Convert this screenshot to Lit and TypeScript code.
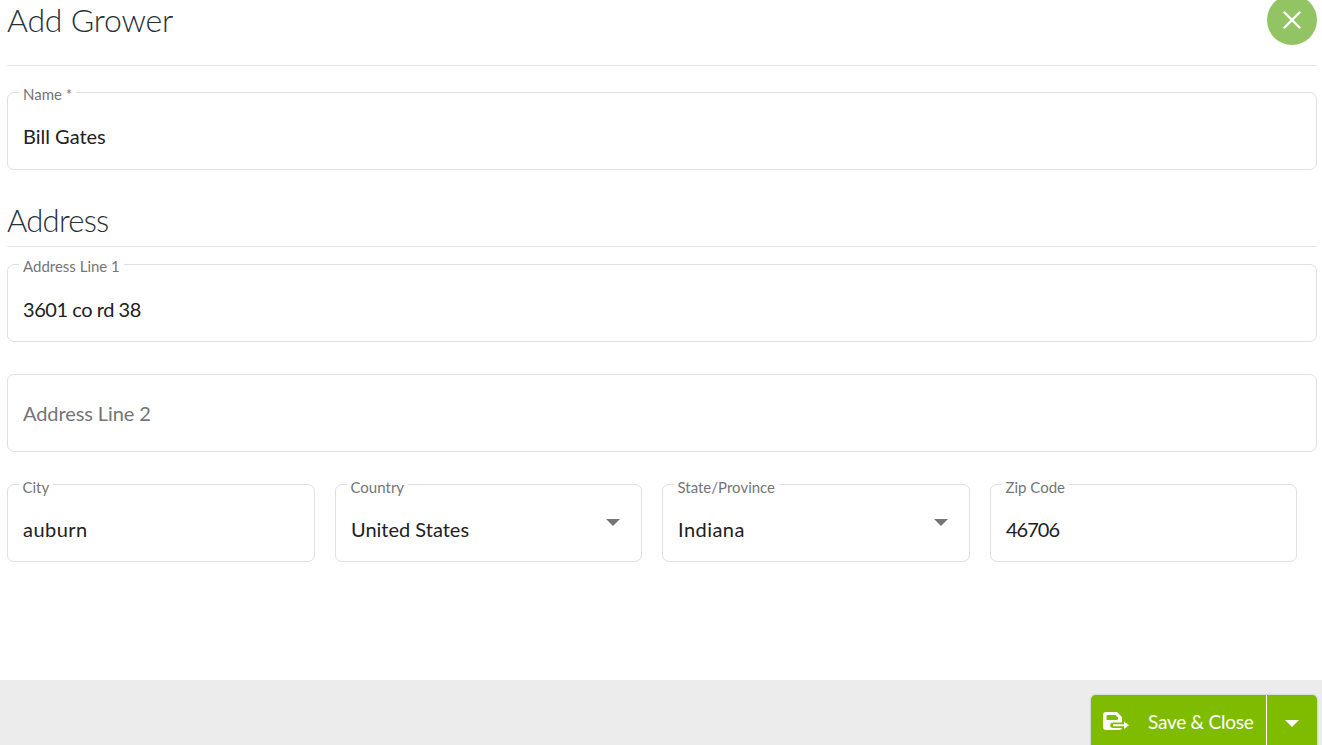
import { LitElement, html, css } from "lit";
import { customElement } from "lit/decorators.js";

@customElement("text-field")
class TextField extends LitElement {
  static properties = {
    label: {},
    value: {},
    select: { type: Boolean },
    tight: { type: Boolean },
    tighter: { type: Boolean },
    wide: { type: Boolean },
    low: { type: Boolean },
    lift: { type: Boolean },
  };
  label = "";
  value = "";
  select = false;
  tight = false;
  tighter = false;
  wide = false;
  low = false;
  lift = false;
  static styles = css`
    :host { display: block; }
    .box {
      position: relative;
      box-sizing: border-box;
      height: 78px;
      border: 1px solid #e0e0e0;
      border-radius: 7px;
      background: #fff;
      display: flex;
      align-items: center;
      padding: 12px 15px 0;
      font-size: 20px;
      color: #212121;
    }
    .box.lift { padding-top: 10px; }
    .val { flex: 1; white-space: nowrap; }
    .tight .val { letter-spacing: -0.45px; }
    .tighter .val { letter-spacing: -1px; }
    .wide .val { letter-spacing: 0.45px; }
    .label {
      position: absolute;
      left: 11px;
      top: -8px;
      padding: 0 4px;
      background: #fff;
      font-size: 15px;
      line-height: 18px;
      color: #757575;
      white-space: nowrap;
    }
    .low .label { top: -7px; left: 10.5px; }
    .placeholder { color: #757575; letter-spacing: -0.1px; }
    .box.empty { padding-top: 0; }
    .arrow {
      position: absolute;
      right: 21px;
      top: 34px;
      width: 0;
      height: 0;
      border-left: 7px solid transparent;
      border-right: 7px solid transparent;
      border-top: 7px solid #757575;
    }
  `;
  render() {
    if (!this.value) {
      return html`<div class="box empty"><span class="val placeholder">${this.label}</span></div>`;
    }
    const cls = ["box", this.tight && "tight", this.tighter && "tighter", this.wide && "wide", this.low && "low", this.lift && "lift"]
      .filter(Boolean)
      .join(" ");
    return html`<div class=${cls}>
      <span class="label">${this.label}</span>
      <span class="val">${this.value}</span>
      ${this.select ? html`<span class="arrow"></span>` : ""}
    </div>`;
  }
}

@customElement("app-root")
class AppRoot extends LitElement {
  static styles = css`
    :host {
      display: flex;
      flex-direction: column;
      height: 745px;
      overflow: hidden;
      background: #fff;
      font-family: "Lato", "Noto Sans", sans-serif;
      color: #212121;
    }
    .main { flex: 1; padding: 0 5px 0 7px; min-height: 0; }
    .head {
      display: flex;
      justify-content: space-between;
      height: 65px;
      border-bottom: 1px solid #e6e6e6;
    }
    h1, h2 { margin: 0; font-weight: 300; color: #263238; }
    h1 { font-size: 32px; line-height: 40px; letter-spacing: -0.2px; }
    .close {
      width: 50px;
      height: 50px;
      margin-top: -5px;
      border: 0;
      padding: 0;
      border-radius: 50%;
      background: #92c464;
      display: flex;
      align-items: center;
      justify-content: center;
    }
    .name { display: block; margin-top: 26px; }
    .sec {
      margin-top: 31px;
      height: 46px;
      border-bottom: 1px solid #e6e6e6;
      box-sizing: border-box;
    }
    h2 { font-size: 31px; line-height: 38px; letter-spacing: -0.75px; }
    .stack { margin-top: 17px; display: flex; flex-direction: column; gap: 32px; }
    .row {
      display: grid;
      grid-template-columns: 308px 307px 308px 307px;
      column-gap: 20px;
    }
    .foot {
      height: 65px;
      flex: none;
      background: #ececec;
      display: flex;
      justify-content: flex-end;
      padding: 15px 5px 0 0;
      box-sizing: border-box;
      overflow: hidden;
    }
    .btn {
      width: 226px;
      height: 60px;
      border-radius: 5px 5px 0 0;
      background: #7fbc00;
      color: #fff;
      display: flex;
      box-shadow: 0 0 2px rgba(0,0,0,.3);
      font-size: 19px;
    }
    .save {
      flex: 1;
      display: flex;
      align-items: center;
      box-sizing: border-box;
      padding: 0 0 8px 12px;
      border-right: 1px solid #fff;
    }
    .save span { margin-left: 19px; white-space: nowrap; letter-spacing: -0.25px; }
    .drop {
      width: 50px;
      display: flex;
      justify-content: center;
      padding-top: 25px;
      box-sizing: border-box;
    }
    .caret {
      width: 0;
      height: 0;
      border-left: 7px solid transparent;
      border-right: 7px solid transparent;
      border-top: 7px solid #fff;
    }
  `;
  render() {
    return html`
      <div class="main">
        <div class="head">
          <h1>Add Grower</h1>
          <button class="close" aria-label="Close">
            <svg width="20" height="20" viewBox="0 0 20 20">
              <path d="M2.5 2.5 L17.5 17.5 M17.5 2.5 L2.5 17.5" stroke="#fff" stroke-width="2.4" stroke-linecap="round" fill="none"></path>
            </svg>
          </button>
        </div>
        <text-field class="name" label="Name *" value="Bill Gates" lift></text-field>
        <div class="sec"><h2>Address</h2></div>
        <div class="stack">
          <text-field label="Address Line 1" value="3601 co rd 38" tight></text-field>
          <text-field label="Address Line 2"></text-field>
          <div class="row">
            <text-field label="City" value="auburn" low wide></text-field>
            <text-field label="Country" value="United States" select low></text-field>
            <text-field label="State/Province" value="Indiana" select low wide></text-field>
            <text-field label="Zip Code" value="46706" tighter low></text-field>
          </div>
        </div>
      </div>
      <div class="foot">
        <div class="btn">
          <div class="save">
            <svg width="26" height="18" viewBox="0 0 26 18">
              <path fill="#fff" fill-rule="evenodd" d="M3 0 H14 L19 5 V15 A3 3 0 0 1 16 18 H3 A3 3 0 0 1 0 15 V3 A3 3 0 0 1 3 0 Z M4.5 3 A1 1 0 0 0 3.5 4 V7 A1 1 0 0 0 4.5 8 H14 A1 1 0 0 0 15 7 V5.5 L12.5 3 Z"></path>
              <path fill="#7fbc00" d="M10 10.5 H20 V16 H10 A2.75 2.75 0 0 1 10 10.5 Z"></path>
              <path fill="#fff" d="M10 12.2 H21 V9.5 L26 13.2 L21 17 V14.2 H10 Z"></path>
            </svg>
            <span>Save &amp; Close</span>
          </div>
          <div class="drop"><span class="caret"></span></div>
        </div>
      </div>
    `;
  }
}
